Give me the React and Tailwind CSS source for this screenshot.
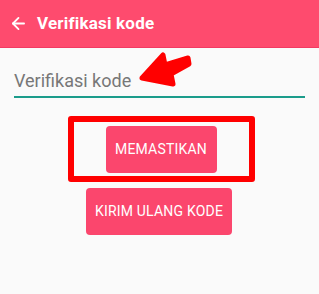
import { ArrowLeft } from "lucide-react";

const App = () => {
  return (
    <div
      className="relative w-[319px] h-[294px] bg-[#fafafa] overflow-hidden"
      style={{ fontFamily: "Roboto, 'Noto Sans', sans-serif" }}
    >
      <div className="h-[48px] bg-[#fe4b6e] border-b border-[#f23a62] flex items-center pl-[9px]">
        <ArrowLeft className="w-[19px] h-[19px] text-white" strokeWidth={2.3} />
        <span className="ml-[9px] text-white font-bold text-[17px] tracking-[0.2px]">
          Verifikasi kode
        </span>
      </div>

      <div className="px-[14px] pt-[23px]">
        <div className="pb-[4px] border-b-2 border-[#1b9c8b] leading-[20px]">
          <span className="text-[18px] text-[#777777]">Verifikasi kode</span>
        </div>
      </div>

      <div className="flex flex-col items-center mt-[18px]">
        <div className="ml-[3px] w-[187px] h-[66px] border-[6px] border-[#ff0000] rounded-[3px] flex items-center justify-center">
          <button className="w-[111px] h-[47px] bg-[#fb466d] rounded-[4px] text-white text-[14px] tracking-[0.2px]">
            MEMASTIKAN
          </button>
        </div>
        <button className="mt-[6px] ml-[-1px] w-[146px] h-[47px] bg-[#fb466d] rounded-[4px] text-white text-[14px] tracking-[0.2px]">
          KIRIM ULANG KODE
        </button>
      </div>

      <svg
        className="absolute left-0 top-0 pointer-events-none"
        width="319"
        height="294"
        viewBox="0 0 319 294"
      >
        <path
          d="M142 78 L163 55 L165 65 L188 58 L189 64 L171 74 L173 84 Z"
          fill="#ff0000"
          stroke="#ff0000"
          strokeWidth="5"
          strokeLinejoin="round"
        />
      </svg>
    </div>
  );
};

export default App;
